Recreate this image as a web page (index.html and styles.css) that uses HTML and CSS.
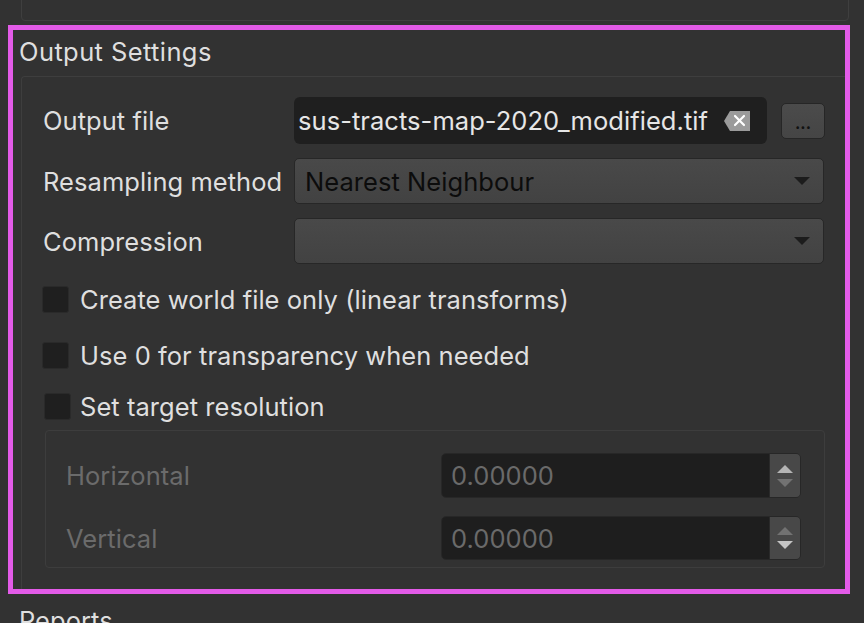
FILE: index.html
```html
<!DOCTYPE html>
<html lang="en">
<head>
<meta charset="utf-8">
<title>Output Settings</title>
<link rel="stylesheet" href="styles.css">
</head>
<body>
<div class="prev-group"></div>
<section class="highlight">
  <div class="group-title">Output Settings</div>
  <div class="group-frame">
    <div class="form-row row-file">
      <span class="label">Output file</span>
      <div class="file-input">
        <div class="file-clip"><span class="file-text">sus-tracts-map-2020_modified.tif</span></div>
        <svg class="clear-icon" width="26" height="20" viewBox="0 0 26 20">
          <path d="M6 0H26V20H6L0 10Z" fill="#9b9b9b"/>
          <path d="M11 5L20 14M20 5L11 14" stroke="#ffffff" stroke-width="2.2" stroke-linecap="round"/>
        </svg>
      </div>
      <button class="browse">...</button>
    </div>
    <div class="form-row">
      <span class="label">Resampling method</span>
      <div class="combo">
        <span class="combo-text">Nearest Neighbour</span>
        <svg class="combo-arrow" width="16" height="8" viewBox="0 0 16 8"><path d="M0 0H16L8 8Z" fill="#1c1c1c"/></svg>
      </div>
    </div>
    <div class="form-row">
      <span class="label">Compression</span>
      <div class="combo">
        <span class="combo-text"></span>
        <svg class="combo-arrow" width="16" height="8" viewBox="0 0 16 8"><path d="M0 0H16L8 8Z" fill="#1c1c1c"/></svg>
      </div>
    </div>
    <div class="check-row check-first">
      <span class="checkbox"></span>
      <span class="check-label">Create world file only (linear transforms)</span>
    </div>
    <div class="check-row check-second">
      <span class="checkbox"></span>
      <span class="check-label">Use 0 for transparency when needed</span>
    </div>
    <div class="check-row check-third">
      <span class="checkbox checkbox-title"></span>
      <span class="check-label">Set target resolution</span>
    </div>
    <div class="res-frame">
      <div class="spin-row">
        <span class="dim-label">Horizontal</span>
        <div class="spin">
          <span class="spin-text">0.00000</span>
          <span class="spin-btns">
            <svg width="16" height="8" viewBox="0 0 16 8"><path d="M0 8H16L8 0Z" fill="#b4b4b4"/></svg>
            <svg width="16" height="8" viewBox="0 0 16 8"><path d="M0 0H16L8 8Z" fill="#727272"/></svg>
          </span>
        </div>
      </div>
      <div class="spin-row spin-row-second">
        <span class="dim-label">Vertical</span>
        <div class="spin spin-short">
          <span class="spin-text">0.00000</span>
          <span class="spin-btns">
            <svg width="16" height="8" viewBox="0 0 16 8"><path d="M0 8H16L8 0Z" fill="#727272"/></svg>
            <svg width="16" height="8" viewBox="0 0 16 8"><path d="M0 0H16L8 8Z" fill="#c4c4c4"/></svg>
          </span>
        </div>
      </div>
    </div>
  </div>
</section>
<div class="next-title">Reports</div>
</body>
</html>
```
FILE: styles.css
```css
html, body {
  margin: 0;
  padding: 0;
}

body {
  background: #323232;
  color: #dfdfdf;
  font-family: Inter, "Liberation Sans", sans-serif;
  font-size: 25.5px;
  letter-spacing: 0.05px;
  height: 623px;
  overflow: hidden;
}

.prev-group {
  margin: -20px 15px 0 21px;
  height: 39px;
  border: 1px solid #3f3f3f;
  border-radius: 4px;
}

.highlight {
  margin: 4px 14px 0 8px;
  border: 5px solid #e35be8;
  height: 559px;
  display: flex;
  flex-direction: column;
  overflow: hidden;
}

.group-title {
  padding: 7px 0 0 6px;
  line-height: 30px;
  letter-spacing: 0.4px;
}

.group-frame {
  flex: 1;
  margin: 9px 0 0 8px;
  border-top: 1px solid #3e3e3e;
  border-left: 1px solid #3e3e3e;
  border-top-left-radius: 4px;
  padding: 20px 20px 0 21px;
}

.form-row {
  display: flex;
  align-items: center;
  height: 46px;
  margin-bottom: 14px;
}

.row-file {
  height: 47px;
}

.label {
  flex: none;
  width: 251px;
  white-space: nowrap;
}

.file-input {
  flex: 1;
  height: 47px;
  display: flex;
  align-items: center;
  background: #1f1f1f;
  border-radius: 6px;
  padding: 0 17px 0 2px;
  overflow: hidden;
}

.file-clip {
  flex: 1;
  display: flex;
  justify-content: flex-end;
  white-space: nowrap;
}

.file-text {
  color: #e6e6e6;
}

.clear-icon {
  flex: none;
  margin-left: 16px;
}

.browse {
  flex: none;
  margin-left: 14px;
  width: 44px;
  height: 36px;
  padding: 0 0 7px;
  border: 1px solid #262626;
  border-radius: 5px;
  background: linear-gradient(#4b4b4b, #454545);
  color: #111111;
  font-family: Inter, "Liberation Sans", sans-serif;
  font-size: 16px;
  font-weight: bold;
  line-height: 1;
  display: flex;
  align-items: flex-end;
  justify-content: center;
  letter-spacing: 0;
}

.combo {
  flex: 1;
  height: 46px;
  box-sizing: border-box;
  margin-right: 1px;
  display: flex;
  align-items: center;
  justify-content: space-between;
  padding: 0 13px 0 10px;
  border: 1px solid #272727;
  border-radius: 5px;
  background: linear-gradient(#494949, #424242);
  color: #0c0c0c;
}

.combo-arrow {
  flex: none;
}

.check-row {
  display: flex;
  align-items: center;
  height: 28px;
}

.check-first {
  margin-top: 21px;
}

.check-second {
  margin-top: 28px;
}

.check-third {
  margin-top: 23px;
}

.checkbox {
  flex: none;
  width: 27px;
  height: 27px;
  box-sizing: border-box;
  margin: 0 11px 0 -1px;
  background: #1f1f1f;
  border: 1px solid #2a2a2a;
  border-radius: 3px;
}

.checkbox-title {
  margin: 0 9px 0 1px;
}

.res-frame {
  margin: 10px 0 0 2px;
  border: 1px solid #3d3d3d;
  border-radius: 4px;
  padding: 22px 23px 7px 20px;
}

.spin-row {
  display: flex;
  align-items: center;
  height: 45px;
}

.spin-row-second {
  margin-top: 18px;
  height: 44px;
}

.dim-label {
  flex: 1;
  color: #6b6b6b;
}

.spin {
  flex: none;
  width: 360px;
  height: 45px;
  box-sizing: border-box;
  display: flex;
  border: 1px solid #272727;
  border-radius: 5px;
  overflow: hidden;
}

.spin-short {
  height: 44px;
}

.spin-text {
  flex: 1;
  display: flex;
  align-items: center;
  padding-left: 9px;
  background: #1e1e1e;
  color: #6a6a6a;
}

.spin-btns {
  flex: none;
  width: 30px;
  display: flex;
  flex-direction: column;
  align-items: center;
  justify-content: center;
  gap: 6px;
  background: #484848;
  border-left: 1px solid #2a2a2a;
}

.spin-btns svg {
  display: block;
}

.next-title {
  margin-top: 12px;
  padding-left: 19px;
  line-height: 30px;
}
```
